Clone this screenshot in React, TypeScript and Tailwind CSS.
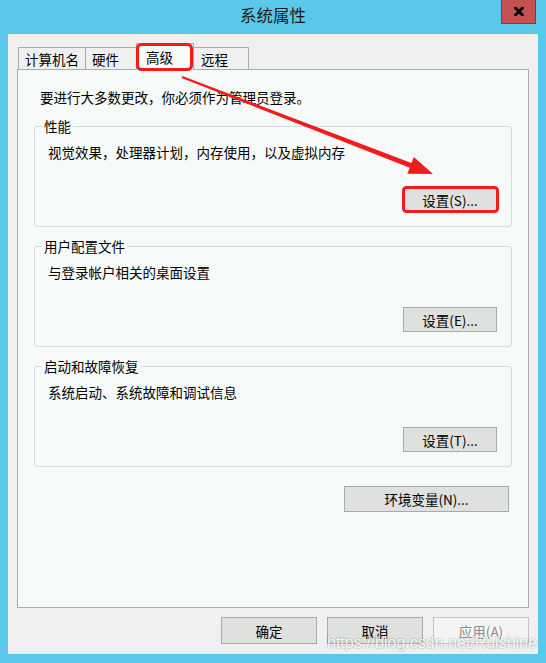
import React from "react";

const FONT = "font-['Noto_Sans_CJK_SC','Liberation_Sans',sans-serif]";

function Btn({ children, className = "", disabled = false }: { children: React.ReactNode; className?: string; disabled?: boolean }) {
  return (
    <div
      className={
        (disabled
          ? "bg-[#f4f4f4] border-[#c4c4c4] text-[#8c8c8c] "
          : "bg-[#dfe1de] border-[#a9a9a9] text-black ") +
        "border flex items-center justify-center text-[13.5px] leading-[18px] " +
        className
      }
    >
      {children}
    </div>
  );
}

function Group({ title, text, btn, className = "" }: { title: string; text: string; btn: string; className?: string }) {
  return (
    <fieldset className={"border border-[#d3dde2] rounded-[3px] min-w-0 " + className}>
      <legend className="ml-[7px] px-[2px] text-[13.5px] leading-[18px]">{title}</legend>
      <div className="pl-[13px] pr-[14px] pt-[8px] pb-[14px] flex flex-col">
        <div className="text-[13.5px] leading-[18px]">{text}</div>
        <div className="flex justify-end mt-[26px]">
          <Btn className="w-[94px] h-[25px]">{btn}</Btn>
        </div>
      </div>
    </fieldset>
  );
}

export default function App() {
  return (
    <div className={"relative w-[546px] h-[663px] bg-[#5ac8ea] flex flex-col text-black " + FONT}>
      {/* title bar */}
      <div className="relative h-[34px] flex items-center justify-center">
        <span className="text-[16.5px] leading-none text-[#1a1a1a] -mt-[3px]">系统属性</span>
        <div className="absolute right-[10px] top-0 w-[35px] h-[24px] bg-[#c75050] border border-[#8e3636] border-t-0 flex items-center justify-center">
          <svg width="10" height="9" viewBox="0 0 10 9">
            <path d="M1.5 1 L8.5 8 M8.5 1 L1.5 8" stroke="#000" strokeWidth="2.8" strokeLinecap="square" />
          </svg>
        </div>
      </div>

      {/* dialog body */}
      <div className="mx-[8px] h-[620px] bg-[#f0f0f0] px-[9px] pt-[9px] flex flex-col">
        {/* tabs */}
        <div className="relative z-10 flex items-end h-[27px] -mb-px">
          <div className="ml-[1px] w-[68px] h-[23px] border border-[#acacac] bg-[#f0f0f0] flex items-center pl-[6px] text-[13.5px] leading-[18px]">计算机名</div>
          <div className="-ml-px w-[52px] h-[23px] border border-[#acacac] bg-[#f0f0f0] flex items-center pl-[6px] text-[13.5px] leading-[18px]">硬件</div>
          <div className="-ml-px w-[58px] h-[27px] border border-b-0 border-[#acacac] bg-[#f6faf8] flex items-start pt-[4px] pl-[9px] text-[13.5px] leading-[18px]">高级</div>
          <div className="-ml-px w-[56px] h-[23px] border border-[#acacac] bg-[#f0f0f0] flex items-center pl-[7px] text-[13.5px] leading-[18px]">远程</div>
        </div>

        {/* tab page */}
        <div className="h-[539px] border border-[#acacac] bg-[#f6faf8] pt-[18px] px-[16px] flex flex-col">
          <div className="ml-[6px] text-[13.5px] leading-[18px]">要进行大多数更改，你必须作为管理员登录。</div>
          <Group className="mt-[11px]" title="性能" text="视觉效果，处理器计划，内存使用，以及虚拟内存" btn="设置(S)..." />
          <Group className="mt-[10px]" title="用户配置文件" text="与登录帐户相关的桌面设置" btn="设置(E)..." />
          <Group className="mt-[10px]" title="启动和故障恢复" text="系统启动、系统故障和调试信息" btn="设置(T)..." />
          <div className="flex justify-end mt-[19px] mr-[3px]">
            <Btn className="w-[165px] h-[26px]">环境变量(N)...</Btn>
          </div>
        </div>

        {/* bottom buttons */}
        <div className="mt-[9px] flex justify-end gap-[10px]">
          <Btn className="w-[96px] h-[27px]">确定</Btn>
          <Btn className="w-[96px] h-[27px]">取消</Btn>
          <Btn className="w-[96px] h-[27px]" disabled>应用(A)</Btn>
        </div>
      </div>

      {/* red annotations */}
      <svg className="absolute inset-0 z-20 pointer-events-none" width="546" height="663" viewBox="0 0 546 663">
        <rect x="137.5" y="44.5" width="54" height="25" rx="4" fill="none" stroke="#f21c1c" strokeWidth="3" />
        <rect x="403.5" y="187.5" width="94" height="24" rx="3" fill="none" stroke="#f21c1c" strokeWidth="3" />
        <polygon
          points="182.4,76.1 411.5,163.0 413.8,157.0 433,174 407.3,173.7 409.7,167.7 181.6,77.9"
          fill="#f21c1c"
        />
      </svg>

      {/* watermark */}
      <div className="absolute z-20 left-[327px] top-[634px] font-['Liberation_Sans',sans-serif] text-[16px] leading-[18px] text-white/90 [text-shadow:0_0_2px_rgba(0,0,0,0.45)] pointer-events-none">
        https://blog.csdn.net/Ruishine
      </div>
    </div>
  );
}
